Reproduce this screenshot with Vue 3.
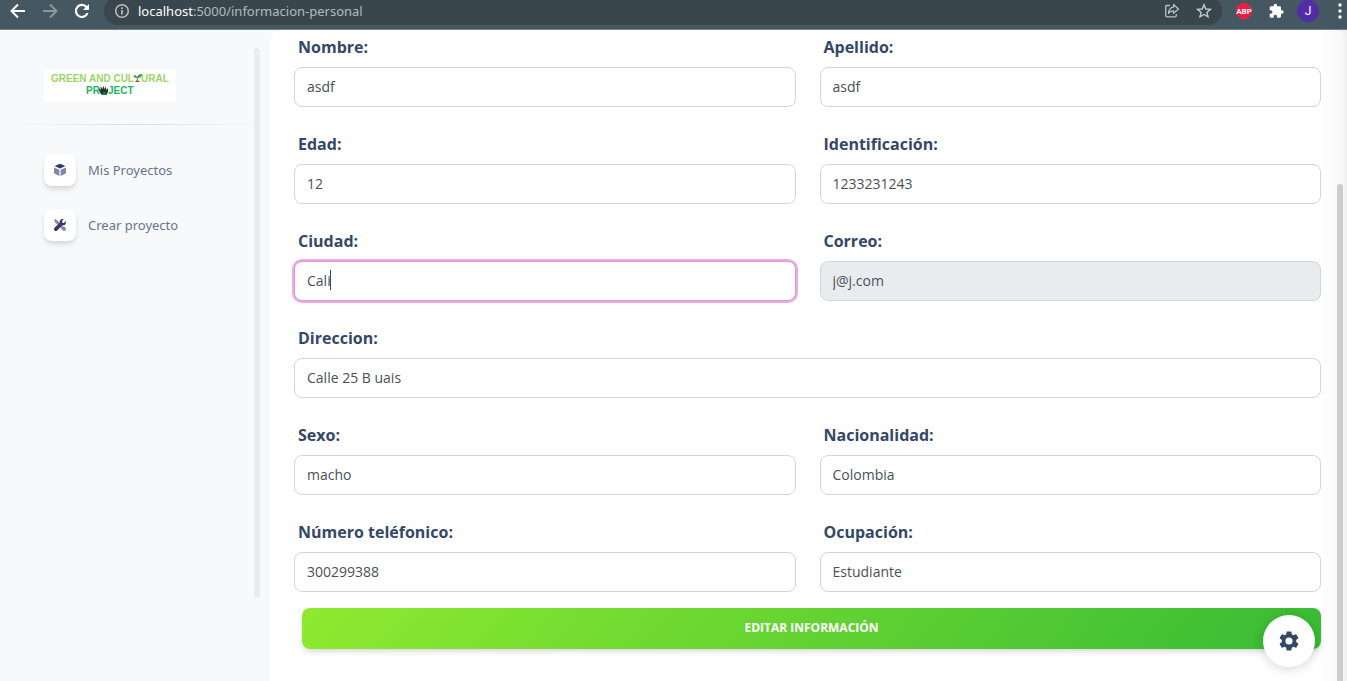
<script setup>
import { reactive } from 'vue'

const fields = reactive([
  { id: 'nombre', label: 'Nombre:', value: 'asdf' },
  { id: 'apellido', label: 'Apellido:', value: 'asdf' },
  { id: 'edad', label: 'Edad:', value: '12' },
  { id: 'identificacion', label: 'Identificación:', value: '1233231243' },
  { id: 'ciudad', label: 'Ciudad:', value: 'Cali', active: true },
  { id: 'correo', label: 'Correo:', value: 'j@j.com', disabled: true },
  { id: 'direccion', label: 'Direccion:', value: 'Calle 25 B uais', wide: true },
  { id: 'sexo', label: 'Sexo:', value: 'macho' },
  { id: 'nacionalidad', label: 'Nacionalidad:', value: 'Colombia' },
  { id: 'telefono', label: 'Número teléfonico:', value: '300299388' },
  { id: 'ocupacion', label: 'Ocupación:', value: 'Estudiante' }
])
</script>

<template>
  <div class="window">
    <header class="toolbar">
      <button class="tool" aria-label="Atrás">
        <svg width="16" height="16" viewBox="0 0 16 16" fill="none" stroke="#fff" stroke-width="2"><path d="M15 8H2M8 1.500L1.500 8L8 14.500" /></svg>
      </button>
      <button class="tool" aria-label="Adelante">
        <svg width="16" height="16" viewBox="0 0 16 16" fill="none" stroke="#8d989e" stroke-width="2"><path d="M1 8H14M8 1.500L14.500 8L8 14.500" /></svg>
      </button>
      <button class="tool" aria-label="Recargar">
        <svg width="16" height="16" viewBox="0 0 16 16"><path d="M13.500 10.200A6 6 0 1 1 12.600 4.200" fill="none" stroke="#fff" stroke-width="2.200" /><path d="M15 1V7H9Z" fill="#fff" /></svg>
      </button>
      <div class="address">
        <svg width="16" height="16" viewBox="0 0 16 16" fill="none" stroke="#b9c0c4" stroke-width="1.500"><circle cx="8" cy="8" r="6.300" /><path d="M8 7V11.500M8 4.300V5.900" stroke-width="1.700" /></svg>
        <span class="url"><b>localhost</b>:5000/informacion-personal</span>
        <button class="tool" aria-label="Compartir">
          <svg width="16" height="16" viewBox="0 0 16 16" fill="none" stroke="#b9c0c4" stroke-width="1.300" stroke-linejoin="round"><path d="M6 2.500H3Q1.700 2.500 1.700 3.800V12.500Q1.700 13.800 3 13.800H11Q12.300 13.800 12.300 12.500V11" /><path d="M9.500 1.500L14.500 6L9.500 10.300V7.800Q6 7.700 4.500 10.500Q5 4.500 9.500 4.200Z" /></svg>
        </button>
        <button class="tool" aria-label="Marcador">
          <svg width="16" height="16" viewBox="0 0 16 16" fill="none" stroke="#c3c9cc" stroke-width="1.400"><path d="M8 1.800L9.800 6L14.400 6.400L10.900 9.400L12 13.900L8 11.500L4 13.900L5.100 9.400L1.600 6.400L6.200 6Z" /></svg>
        </button>
      </div>
      <button class="tool" aria-label="Adblock Plus">
        <svg width="16" height="16" viewBox="0 0 16 16"><path d="M5 0H11L16 5V11L11 16H5L0 11V5Z" fill="#ed1e45" /><text x="8" y="11" class="abp">ABP</text></svg>
      </button>
      <button class="tool" aria-label="Extensiones">
        <svg width="16" height="16" viewBox="0 0 24 24" fill="#fff"><path d="M21 11h-1.500V7a2 2 0 0 0-2-2h-4V3.500a2.500 2.500 0 0 0-5 0V5h-4a2 2 0 0 0-2 2v3.800H4a2.700 2.700 0 0 1 0 5.400H2.500V20a2 2 0 0 0 2 2h3.800v-1.500a2.700 2.700 0 0 1 5.400 0V22h3.800a2 2 0 0 0 2-2v-4H21a2.500 2.500 0 0 0 0-5z" /></svg>
      </button>
      <button class="avatar" aria-label="Perfil">J</button>
      <button class="tool dots" aria-label="Menú">
        <svg width="4" height="16" viewBox="0 0 4 16" fill="#fff"><circle cx="2" cy="2" r="1.700" /><circle cx="2" cy="8" r="1.700" /><circle cx="2" cy="14" r="1.700" /></svg>
      </button>
    </header>

    <div class="body">
      <aside class="sidebar">
        <div class="side-content">
          <a href="#" class="logo" aria-label="Green and Cultural Project">
            <svg width="132" height="32" viewBox="0 0 132 32">
              <rect width="132" height="32" fill="#fff" />
              <g class="logo-light"><text x="7" y="12">GREEN AND CUL</text><text x="97" y="12">URAL</text></g>
              <g class="logo-dark"><text x="42" y="24">PR</text><text x="64" y="24">JECT</text></g>
              <path d="M93 11Q93.500 8 94 7" stroke="#77503e" stroke-width="1" fill="none" />
              <path d="M91 12H96L95 10.800H92Z" fill="#8b5440" />
              <path d="M93.500 8Q89.500 8.500 89.500 5Q93 5 93.500 8ZM93.500 8Q93 4 98 4Q98 8 93.500 8Z" fill="#4b9b40" />
              <path d="M57 24Q54.500 21 55 18L57 20L56.500 16L58.500 19L59 15.500L60.500 19L62 16L62 20L64 18Q64.500 23 62 25H58Z" fill="#24362f" />
              <path d="M58 25L60 21L63 25Z" fill="#15804b" />
            </svg>
          </a>
          <hr class="divider" />
          <nav>
            <a href="#" class="nav-item">
              <span class="nav-icon">
                <svg width="14" height="14" viewBox="0 0 14 14"><path d="M7 .8L12.400 3.100L7 5.600L1.600 3.100Z" fill="#343767" /><path d="M1 4.400L6.400 6.800V13L1.800 10.800Q1 10.400 1 9.500ZM13 4.400L7.600 6.800V13L12.200 10.800Q13 10.400 13 9.500Z" fill="#8587a9" /></svg>
              </span>
              Mis Proyectos
            </a>
            <a href="#" class="nav-item">
              <span class="nav-icon">
                <svg width="14" height="14" viewBox="0 0 14 14"><path d="M1 2L2.500 1L5.500 3.500L10 8L8 10L3.500 5.500L2.500 5ZM9 8.300Q12.500 8.500 13 11Q13 13 11 13Q8.500 12.500 8 9.500Z" fill="#8587a9" /><path d="M12.800 3.100L11 5L9.200 4.800L9 3L10.900 1.100Q8.700.5 7.300 2.100Q6.400 3.200 6.800 4.700L1.500 9.700Q.3 11.200 1.500 12.400Q2.800 13.700 4.200 12.500L9.300 7.200Q11 7.700 12.200 6.500Q13.400 5.200 12.800 3.100Z" fill="#343767" /></svg>
              </span>
              Crear proyecto
            </a>
          </nav>
        </div>
        <div class="side-scroll"></div>
      </aside>

      <main class="main">
        <form class="form" @submit.prevent>
          <div v-for="f in fields" :key="f.id" class="field" :class="{ wide: f.wide }">
            <label :for="f.id">{{ f.label }}</label>
            <div class="control">
              <input :id="f.id" v-model="f.value" type="text" :disabled="f.disabled" :class="{ active: f.active }" />
              <span v-if="f.active" class="caret" aria-hidden="true">{{ f.value }}</span>
            </div>
          </div>
          <button type="submit" class="submit">EDITAR INFORMACIÓN</button>
        </form>
        <div class="edge"></div>
        <div class="page-scroll"></div>
      </main>
    </div>

    <button class="settings" aria-label="Configuración">
      <svg width="24" height="24" viewBox="0 0 24 24" fill="#344767"><path d="M19.140 12.940c.04-.3.060-.61.060-.94s-.02-.64-.07-.94l2.030-1.580a.49.49 0 0 0 .12-.61l-1.920-3.320a.49.49 0 0 0-.59-.22l-2.390.96a7 7 0 0 0-1.620-.94l-.36-2.540a.48.48 0 0 0-.48-.41h-3.840a.48.48 0 0 0-.47.41l-.36 2.540a7 7 0 0 0-1.620.94l-2.390-.96a.48.48 0 0 0-.59.22L2.740 8.870a.48.48 0 0 0 .12.610l2.030 1.580a6 6 0 0 0 0 1.880l-2.030 1.580a.49.49 0 0 0-.12.610l1.920 3.320c.12.220.37.290.59.220l2.390-.96a7 7 0 0 0 1.620.94l.36 2.540c.05.240.24.410.48.410h3.840c.24 0 .44-.17.470-.41l.36-2.540a7 7 0 0 0 1.620-.94l2.390.96c.22.080.47 0 .59-.22l1.920-3.320a.48.48 0 0 0-.12-.61zM12 15.600a3.600 3.600 0 1 1 0-7.200 3.600 3.600 0 0 1 0 7.200z" /></svg>
    </button>
  </div>
</template>

<style>
body {
  background: #f8f9fa;
}
</style>

<style scoped>
* {
  box-sizing: border-box;
}
.window {
  display: flex;
  flex-direction: column;
  height: 100vh;
  overflow: hidden;
  font-family: "Open Sans", "Noto Sans", sans-serif;
}
button {
  border: 0;
  padding: 0;
  font-family: inherit;
  cursor: pointer;
}
svg {
  display: block;
}
.toolbar {
  display: flex;
  align-items: flex-start;
  gap: 16px;
  height: 30px;
  flex: none;
  padding: 3px 5px 0 10px;
  background: #455861;
  border-bottom: 1px solid #728189;
}
.tool {
  flex: none;
  background: none;
}
.avatar {
  width: 22px;
  height: 22px;
  flex: none;
  margin: -3px 3px 0 -3px;
  border-radius: 50%;
  background: #512da8;
  color: #fff;
  font: 12px/22px Roboto, sans-serif;
}
.abp {
  fill: #fff;
  font: bold 8px Roboto, sans-serif;
  text-anchor: middle;
}
.address {
  display: flex;
  align-items: center;
  flex: 1;
  gap: 16px;
  height: 28px;
  margin: -6px -2px 0 -2px;
  padding: 0 10px;
  border-radius: 14px;
  background: #39464d;
}
.url {
  flex: 1;
  margin-left: -8px;
  color: #b4bbbf;
  font-family: "Noto Sans", sans-serif;
  font-size: 13px;
}
.url b {
  color: #fff;
  font-weight: 400;
}
.body {
  display: flex;
  flex: 1;
  min-height: 0;
}
.sidebar {
  display: flex;
  flex: none;
  width: 270px;
  padding: 18px 10px 0 0;
}
.side-content {
  flex: 1;
  padding: 22px 0 0 30px;
}
.logo {
  display: block;
  margin-left: 14px;
}
.logo-light,
.logo-dark {
  font: bold 10px "Liberation Sans", sans-serif;
}
.logo-light {
  fill: #9bd667;
}
.logo-dark {
  fill: #1db45f;
}
.divider {
  height: 1px;
  margin: 22px 0 29px -12px;
  border: 0;
  background: linear-gradient(90deg, transparent, #d8dadd, transparent);
}
nav {
  display: flex;
  flex-direction: column;
  gap: 23px;
  padding-left: 14px;
}
.nav-item {
  display: flex;
  align-items: center;
  gap: 12px;
  color: #67748e;
  font-family: "Noto Sans", sans-serif;
  font-size: 13px;
  text-decoration: none;
}
.nav-icon {
  display: grid;
  place-items: center;
  width: 32px;
  height: 32px;
  border-radius: 8px;
  background: #fff;
  box-shadow: 0 4px 6px -1px rgba(20, 20, 20, 0.12), 0 2px 4px -1px rgba(20, 20, 20, 0.07);
}
.side-scroll {
  width: 6px;
  height: 550px;
  border-radius: 3px;
  background: #eaebed;
}
.main {
  position: relative;
  flex: 1;
  min-width: 0;
  padding: 5px 26px 0 24px;
  border-radius: 12px 12px 0 0;
  background: #fff;
}
.form {
  display: grid;
  grid-template-columns: 1fr 1fr;
  gap: 25px 24px;
}
.field {
  display: flex;
  flex-direction: column;
  gap: 8px;
}
.wide {
  grid-column: 1 / -1;
}
label {
  align-self: flex-start;
  margin-left: 4px;
  color: #344767;
  font-size: 16px;
  font-weight: 700;
  line-height: 24px;
}
.control {
  position: relative;
}
input {
  display: block;
  width: 100%;
  height: 40px;
  padding: 0 12px 2px;
  border: 1px solid #d2d6da;
  border-radius: 8px;
  outline: 0;
  background: #fff;
  color: #495057;
  font: 14px "Open Sans", "Noto Sans", sans-serif;
}
input:disabled {
  background: #e9ecef;
}
input.active {
  border-color: #e293d3;
  box-shadow: 0 0 0 2px #e9aede;
}
.caret {
  position: absolute;
  top: 9px;
  left: 12px;
  height: 20px;
  border-right: 1px solid #344767;
  color: transparent;
  font-size: 14px;
  line-height: 20px;
  pointer-events: none;
}
.submit {
  grid-column: 1 / -1;
  height: 41px;
  margin: -9px 0 0 8px;
  padding-bottom: 2px;
  border-radius: 8px;
  background: linear-gradient(310deg, #37bb35, #8fea2f);
  box-shadow: 0 4px 7px -1px rgba(0, 0, 0, 0.11), 0 2px 4px -1px rgba(0, 0, 0, 0.07);
  color: #fff;
  font-size: 12px;
  font-weight: 700;
}
.edge {
  position: absolute;
  inset: 0 0 0 auto;
  width: 27px;
  border-right: 2px solid #f0f0f0;
  background: linear-gradient(90deg, rgba(0, 0, 0, 0), rgba(0, 0, 0, 0.035));
  pointer-events: none;
}
.page-scroll {
  position: absolute;
  top: 154px;
  right: 4px;
  bottom: 0;
  width: 6px;
  border-radius: 3px 3px 0 0;
  background: #cdcdcd;
}
.settings {
  position: fixed;
  right: 32px;
  bottom: 14px;
  display: grid;
  place-items: center;
  width: 52px;
  height: 52px;
  border-radius: 50%;
  background: #fff;
  box-shadow: 0 2px 12px rgba(0, 0, 0, 0.16);
}
</style>
